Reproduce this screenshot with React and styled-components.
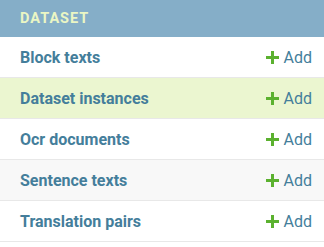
import React from "react";
import styled, { createGlobalStyle } from "styled-components";

const GlobalStyle = createGlobalStyle`
  html, body {
    margin: 0;
    padding: 0;
    background: #ffffff;
    font-family: Roboto, "Liberation Sans", sans-serif;
  }
`;

const Module = styled.div`
  width: 324px;
  background: #ffffff;
`;

const Caption = styled.div`
  height: 37px;
  display: flex;
  align-items: center;
  padding: 0 20px;
  background: #85aec8;
  color: #eaf6c4;
  font-weight: 700;
  font-size: 14.5px;
  letter-spacing: 1px;
`;

const Row = styled.div`
  height: 40px;
  display: flex;
  align-items: center;
  justify-content: space-between;
  padding: 0 12px 0 20px;
  border-bottom: 1px solid #e8e8e8;
  background: ${(p) => (p.$selected ? "#ebf6d0" : p.$alt ? "#f8f8f8" : "#ffffff")};
`;

const Name = styled.a`
  color: #447e9b;
  font-weight: 700;
  font-size: 16px;
  text-decoration: none;
`;

const AddLink = styled.a`
  display: flex;
  align-items: center;
  gap: 5px;
  color: #447e9b;
  font-size: 16px;
  text-decoration: none;
`;

const Plus = () => (
  <svg width="13" height="13" viewBox="0 0 13 13">
    <path d="M5 0h3v5h5v3H8v5H5V8H0V5h5z" fill="#5bb12f" />
  </svg>
);

const models = [
  { name: "Block texts" },
  { name: "Dataset instances", selected: true },
  { name: "Ocr documents" },
  { name: "Sentence texts", alt: true },
  { name: "Translation pairs" },
];

export default function App() {
  return (
    <>
      <GlobalStyle />
      <Module>
        <Caption>DATASET</Caption>
        {models.map((m) => (
          <Row key={m.name} $selected={m.selected} $alt={m.alt}>
            <Name href="#">{m.name}</Name>
            <AddLink href="#">
              <Plus />
              Add
            </AddLink>
          </Row>
        ))}
      </Module>
    </>
  );
}
